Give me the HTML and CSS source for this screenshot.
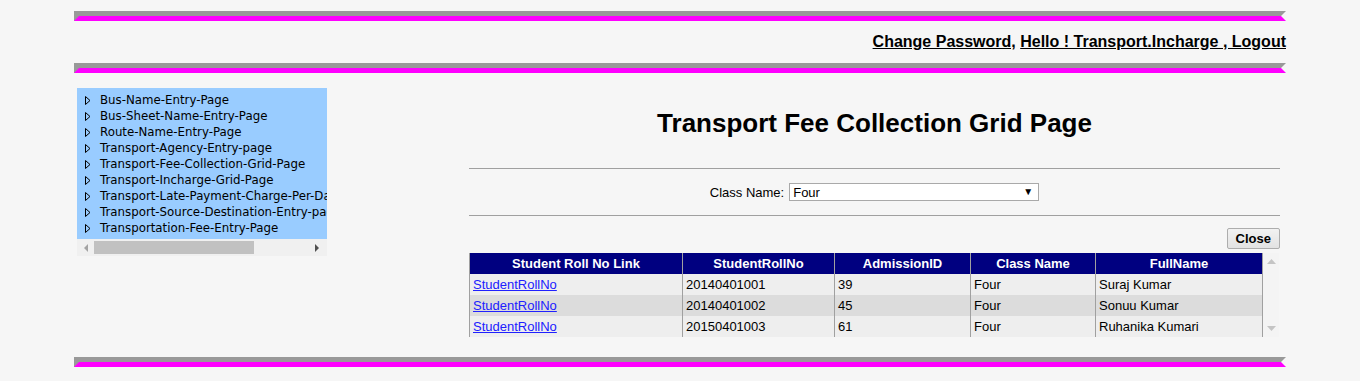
FILE: index.html
```html
<!DOCTYPE html>
<html lang="en">
<head>
    <meta charset="UTF-8">
    <title>Transport Fee Collection Grid Page</title>
    <link rel="stylesheet" href="styles.css">
</head>
<body>
    <div class="page">
        <div class="bar"></div>
        <div class="userline">
            <a href="#">Change Password,</a> <a href="#">Hello ! Transport.Incharge , Logout</a>
        </div>
        <div class="bar"></div>

        <div class="layout">
            <!-- Menu tree -->
            <div class="sidebar">
                <ul class="tree">
                    <li><svg width="6" height="9" viewBox="0 0 6 9"><path d="M0.5 0.5 L5 4.5 L0.5 8.5 Z" fill="none" stroke="#000"/></svg><a href="#">Bus-Name-Entry-Page</a></li>
                    <li><svg width="6" height="9" viewBox="0 0 6 9"><path d="M0.5 0.5 L5 4.5 L0.5 8.5 Z" fill="none" stroke="#000"/></svg><a href="#">Bus-Sheet-Name-Entry-Page</a></li>
                    <li><svg width="6" height="9" viewBox="0 0 6 9"><path d="M0.5 0.5 L5 4.5 L0.5 8.5 Z" fill="none" stroke="#000"/></svg><a href="#">Route-Name-Entry-Page</a></li>
                    <li><svg width="6" height="9" viewBox="0 0 6 9"><path d="M0.5 0.5 L5 4.5 L0.5 8.5 Z" fill="none" stroke="#000"/></svg><a href="#">Transport-Agency-Entry-page</a></li>
                    <li><svg width="6" height="9" viewBox="0 0 6 9"><path d="M0.5 0.5 L5 4.5 L0.5 8.5 Z" fill="none" stroke="#000"/></svg><a href="#">Transport-Fee-Collection-Grid-Page</a></li>
                    <li><svg width="6" height="9" viewBox="0 0 6 9"><path d="M0.5 0.5 L5 4.5 L0.5 8.5 Z" fill="none" stroke="#000"/></svg><a href="#">Transport-Incharge-Grid-Page</a></li>
                    <li><svg width="6" height="9" viewBox="0 0 6 9"><path d="M0.5 0.5 L5 4.5 L0.5 8.5 Z" fill="none" stroke="#000"/></svg><a href="#">Transport-Late-Payment-Charge-Per-Day-Entry-Page</a></li>
                    <li><svg width="6" height="9" viewBox="0 0 6 9"><path d="M0.5 0.5 L5 4.5 L0.5 8.5 Z" fill="none" stroke="#000"/></svg><a href="#">Transport-Source-Destination-Entry-page</a></li>
                    <li><svg width="6" height="9" viewBox="0 0 6 9"><path d="M0.5 0.5 L5 4.5 L0.5 8.5 Z" fill="none" stroke="#000"/></svg><a href="#">Transportation-Fee-Entry-Page</a></li>
                </ul>
                <div class="hscroll">
                    <svg width="5" height="8" viewBox="0 0 5 8"><path d="M4 0 L0 4 L4 8 Z" fill="#a3a3a3"/></svg>
                    <div class="hscroll-thumb"></div>
                    <svg class="hscroll-right" width="5" height="8" viewBox="0 0 5 8"><path d="M0 0 L4 4 L0 8 Z" fill="#505050"/></svg>
                </div>
            </div>

            <!-- Page content -->
            <div class="content">
                <h2 class="title">Transport Fee Collection Grid Page</h2>
                <div class="rule"></div>
                <div class="filter">
                    <label for="class-name">Class Name:</label>
                    <span class="select-wrap">
                        <select id="class-name">
                            <option>Four</option>
                        </select>
                        <span class="select-arrow">&#9660;</span>
                    </span>
                </div>
                <div class="rule"></div>
                <div class="actions">
                    <button class="close-btn">Close</button>
                </div>

                <div class="grid-wrap">
                    <table class="grid">
                        <colgroup>
                            <col class="c1">
                            <col class="c2">
                            <col class="c3">
                            <col class="c4">
                            <col class="c5">
                        </colgroup>
                        <thead>
                            <tr>
                                <th>Student Roll No Link</th>
                                <th>StudentRollNo</th>
                                <th>AdmissionID</th>
                                <th>Class Name</th>
                                <th>FullName</th>
                            </tr>
                        </thead>
                        <tbody>
                            <tr>
                                <td><a href="#">StudentRollNo</a></td>
                                <td>20140401001</td>
                                <td>39</td>
                                <td>Four</td>
                                <td>Suraj Kumar</td>
                            </tr>
                            <tr class="alt">
                                <td><a href="#">StudentRollNo</a></td>
                                <td>20140401002</td>
                                <td>45</td>
                                <td>Four</td>
                                <td>Sonuu Kumar</td>
                            </tr>
                            <tr>
                                <td><a href="#">StudentRollNo</a></td>
                                <td>20150401003</td>
                                <td>61</td>
                                <td>Four</td>
                                <td>Ruhanika Kumari</td>
                            </tr>
                        </tbody>
                    </table>
                    <div class="vscroll">
                        <svg width="9" height="5" viewBox="0 0 9 5"><path d="M0 5 L4.5 0 L9 5 Z" fill="#c4c4c4"/></svg>
                        <svg width="9" height="5" viewBox="0 0 9 5"><path d="M0 0 L4.5 5 L9 0 Z" fill="#c4c4c4"/></svg>
                    </div>
                </div>
            </div>
        </div>

        <div class="bar"></div>
    </div>
</body>
</html>
```

FILE: styles.css
```css
body {
    margin: 0;
    padding: 0;
    background-color: #f6f6f6;
    font-family: "Liberation Sans", Arial, sans-serif;
    color: #000;
}

.page {
    width: 1212px;
    margin: 0 auto;
    padding-top: 11px;
}

/* grey / magenta strip with cut ends */
.bar {
    height: 0;
    border-top: 5px solid #999999;
    border-bottom: 5px solid #ff00ff;
    border-left: 5px solid #999999;
    border-right: 5px solid #f6f6f6;
}

.userline {
    padding: 12px 0;
    line-height: 18px;
    text-align: right;
    font-size: 16px;
    font-weight: bold;
}

.userline a {
    color: #000;
    text-decoration: underline;
}

.layout {
    display: flex;
    align-items: flex-start;
    height: 284px;
}

/* left menu */
.sidebar {
    width: 250px;
    margin: 15px 0 0 3px;
    background-color: #99ccff;
}

.tree {
    list-style: none;
    margin: 0;
    padding: 4px 0 3px 8px;
    overflow: hidden;
    white-space: nowrap;
    font-family: "DejaVu Sans", Tahoma, sans-serif;
    font-size: 11.8px;
}

.tree li {
    display: flex;
    align-items: center;
    height: 16px;
}

.tree svg {
    margin-right: 9px;
    flex-shrink: 0;
}

.tree a {
    color: #000;
    text-decoration: none;
}

.hscroll {
    display: flex;
    align-items: center;
    height: 17px;
    padding: 0 7px;
    background-color: #f0f0f0;
}

.hscroll-thumb {
    width: 160px;
    height: 13px;
    margin-left: 5px;
    background-color: #c1c1c1;
}

.hscroll-right {
    margin-left: auto;
}

/* right content */
.content {
    width: 811px;
    margin-left: 142px;
}

.title {
    margin: 36px 0 31px;
    font-size: 26px;
    line-height: 28px;
    text-align: center;
}

.rule {
    border-top: 1px solid #a0a0a0;
}

.filter {
    display: flex;
    justify-content: center;
    align-items: center;
    gap: 5px;
    margin: 14px 0 14px;
    font-size: 13px;
}

.select-wrap {
    position: relative;
    display: inline-block;
}

.select-wrap select {
    appearance: none;
    -webkit-appearance: none;
    width: 250px;
    height: 18px;
    margin: 0;
    padding: 0 0 0 3px;
    border: 1px solid #a9a9a9;
    border-radius: 0;
    background-color: #fff;
    font-family: "Liberation Sans", Arial, sans-serif;
    font-size: 13px;
    color: #000;
}

.select-arrow {
    position: absolute;
    right: 6px;
    top: 4px;
    font-size: 10px;
    line-height: 10px;
    pointer-events: none;
}

.actions {
    display: flex;
    justify-content: flex-end;
    margin-top: 12px;
    margin-bottom: 4px;
}

.close-btn {
    height: 21px;
    padding: 0 8px;
    border: 1px solid #adadad;
    border-radius: 2px;
    background: linear-gradient(#f2f2f2, #e2e2e2);
    font-family: "Liberation Sans", Arial, sans-serif;
    font-size: 13px;
    font-weight: bold;
    color: #000;
}

.grid-wrap {
    display: flex;
    width: 810px;
    height: 84px;
    overflow: hidden;
}

.grid {
    width: 793px;
    flex-shrink: 0;
    border-collapse: collapse;
    table-layout: fixed;
    font-size: 13px;
}

.grid th,
.grid td {
    height: 21px;
    padding: 0 3px;
    border-left: 1px solid #a0a0a0;
    border-right: 1px solid #a0a0a0;
    white-space: nowrap;
    overflow: hidden;
}

.grid th {
    background-color: #000080;
    color: #fff;
    font-weight: bold;
    text-align: center;
}

.grid td {
    background-color: #eeeeee;
}

.grid tr.alt td {
    background-color: #dcdcdc;
}

.grid td a {
    color: #2020ff;
}

.c1 { width: 213px; }
.c2 { width: 152px; }
.c3 { width: 136px; }
.c4 { width: 125px; }
.c5 { width: 167px; }

.vscroll {
    display: flex;
    flex-direction: column;
    justify-content: space-between;
    align-items: center;
    flex-shrink: 0;
    width: 17px;
    padding: 6px 0;
    background-color: #f4f4f4;
}
```
